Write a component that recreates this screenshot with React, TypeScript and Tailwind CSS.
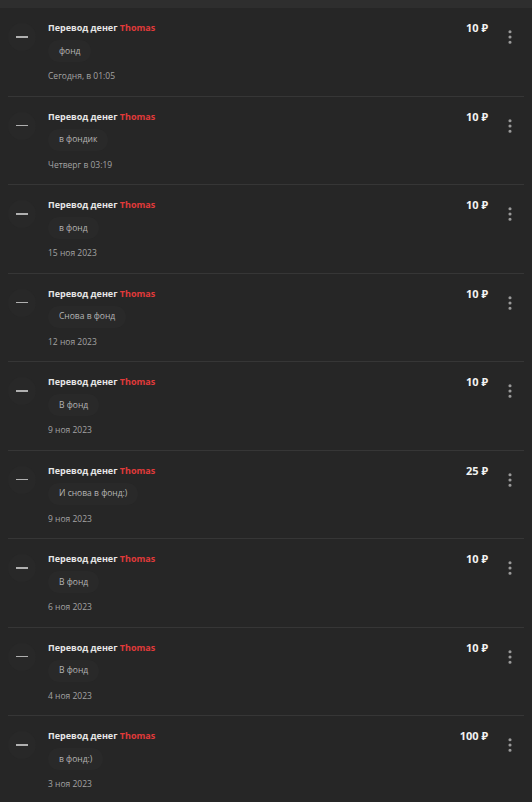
import { EllipsisVertical } from "lucide-react";

type Perevod = {
  id: number;
  comment: string;
  date: string;
  amount: number;
};

const perevody: Perevod[] = [
  { id: 1, comment: "фонд", date: "Сегодня, в 01:05", amount: 10 },
  { id: 2, comment: "в фондик", date: "Четверг в 03:19", amount: 10 },
  { id: 3, comment: "в фонд", date: "15 ноя 2023", amount: 10 },
  { id: 4, comment: "Снова в фонд", date: "12 ноя 2023", amount: 10 },
  { id: 5, comment: "В фонд", date: "9 ноя 2023", amount: 10 },
  { id: 6, comment: "И снова в фонд:)", date: "9 ноя 2023", amount: 25 },
  { id: 7, comment: "В фонд", date: "6 ноя 2023", amount: 10 },
  { id: 8, comment: "В фонд", date: "4 ноя 2023", amount: 10 },
  { id: 9, comment: "в фонд:)", date: "3 ноя 2023", amount: 100 },
];

export default function App() {
  return (
    <div
      className="w-[532px] h-[802px] overflow-hidden bg-[#262626] text-[#e6e6e6]"
      style={{ fontFamily: '"Open Sans", "Noto Sans", sans-serif' }}
    >
      {/* top bar */}
      <div className="h-[8px] bg-[#2e2e2e]" />

      <div className="flex flex-col">
        {perevody.map((p) => (
          <div key={p.id} className="h-[88.5px] mx-[8px] border-b border-[#363636] flex">
            {/* minus */}
            <div className="w-[36px] -ml-[8px] pl-[8px] pt-[15px] shrink-0">
              <div className="w-[28px] h-[28px] rounded-full bg-[#282828] flex items-center justify-center">
                <div className="w-[12px] h-[1.5px] bg-[#b0b0b0]" />
              </div>
            </div>

            {/* content */}
            <div className="flex-1 pt-[13px] pl-[12px]">
              <div className="text-[9px] font-bold leading-[14px]">
                Перевод денег <span className="text-[#e03a3a]">Thomas</span>
              </div>
              <div className="mt-[5px] inline-flex h-[22px] items-center rounded-full bg-[#292929] px-[11px] text-[8.5px] text-[#b5b5b5]">
                {p.comment}
              </div>
              <div className="mt-[8px] text-[8.5px] leading-[12px] text-[#a3a3a3]">{p.date}</div>
            </div>

            {/* amount */}
            <div className="pt-[13px] text-[11px] font-bold leading-[14px] text-[#f2f2f2]">
              {p.amount} ₽
            </div>

            {/* menu */}
            <div className="w-[44px] -mr-[8px] pt-[20px] flex justify-center shrink-0">
              <EllipsisVertical size={18} strokeWidth={2.2} className="text-[#9a9a9a]" />
            </div>
          </div>
        ))}
      </div>
    </div>
  );
}
